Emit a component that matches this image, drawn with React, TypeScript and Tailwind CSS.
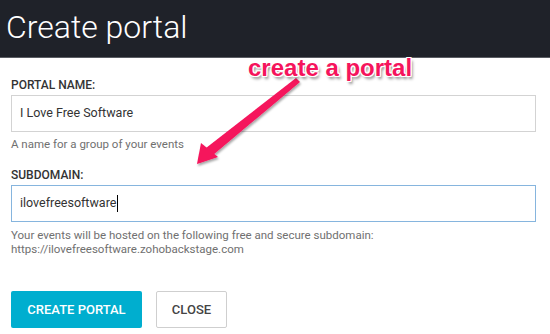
import React from "react";

function Annotation() {
  return (
    <div className="pointer-events-none absolute inset-0">
      <svg width="550" height="334" className="absolute left-0 top-0">
        <defs>
          <filter id="sh" x="-20%" y="-20%" width="140%" height="140%">
            <feDropShadow dx="1" dy="2" stdDeviation="1.2" floodColor="#000" floodOpacity="0.35" />
          </filter>
        </defs>
        <g filter="url(#sh)">
          <polygon points="296,78 300,82 213,155 206,148" fill="#f5145c" />
          <polygon points="197,164 201,143 218,157" fill="#f5145c" />
        </g>
      </svg>
      <div
        className="absolute left-[248px] top-[54px] text-[24px] leading-[28px] font-bold text-[#f5145c]"
        style={{
          fontFamily: '"Liberation Sans", Arial, sans-serif',
          textShadow:
            "-1px -1px 0 #fff, 1px -1px 0 #fff, -1px 1px 0 #fff, 1px 1px 0 #fff, 0 -1px 0 #fff, 0 1px 0 #fff, -1px 0 0 #fff, 1px 0 0 #fff, 2px 3px 3px rgba(0,0,0,0.45)",
        }}
      >
        create a portal
      </div>
    </div>
  );
}

export default function App() {
  return (
    <div className="relative w-[550px] h-[334px] overflow-hidden bg-white font-['Roboto',sans-serif]">
      <div className="h-[58px] bg-[#1f2229] border-b border-[#5a5d63] px-[6px]">
        <h1 className="text-[32px] leading-[54px] font-light text-white">Create portal</h1>
      </div>

      <div className="px-[11px] pt-[20px]">
        <div className="text-[12px] leading-[14px] font-medium text-[#333]">PORTAL NAME:</div>
        <div className="mt-[3px] h-[37px] w-[525px] border border-[#d3d3d3] flex items-center px-[8px] text-[12.5px] text-[#333]">
          I Love Free Software
        </div>
        <div className="mt-[5px] text-[11.5px] leading-[14px] text-[#707070]">A name for a group of your events</div>

        <div className="mt-[17px] text-[12px] leading-[14px] font-medium text-[#333]">SUBDOMAIN:</div>
        <div className="mt-[3px] h-[37px] w-[525px] border border-[#86b5de] flex items-center px-[8px] text-[12.5px] text-[#333]">
          ilovefreesoftware
          <span className="ml-px h-[17px] w-px bg-black" />
        </div>
        <div className="mt-[6px] text-[11.5px] leading-[14px] text-[#707070]">
          <div>Your events will be hosted on the following free and secure subdomain:</div>
          <div>https://ilovefreesoftware.zohobackstage.com</div>
        </div>

        <div className="mt-[35px] flex gap-[14px]">
          <button className="h-[37px] w-[131px] rounded-[2px] bg-[#00aecf] text-[13px] font-medium text-white">
            CREATE PORTAL
          </button>
          <button className="h-[37px] w-[71px] rounded-[2px] border border-[#cfcfcf] bg-white text-[13px] font-medium text-[#444]">
            CLOSE
          </button>
        </div>
      </div>

      <Annotation />
    </div>
  );
}
